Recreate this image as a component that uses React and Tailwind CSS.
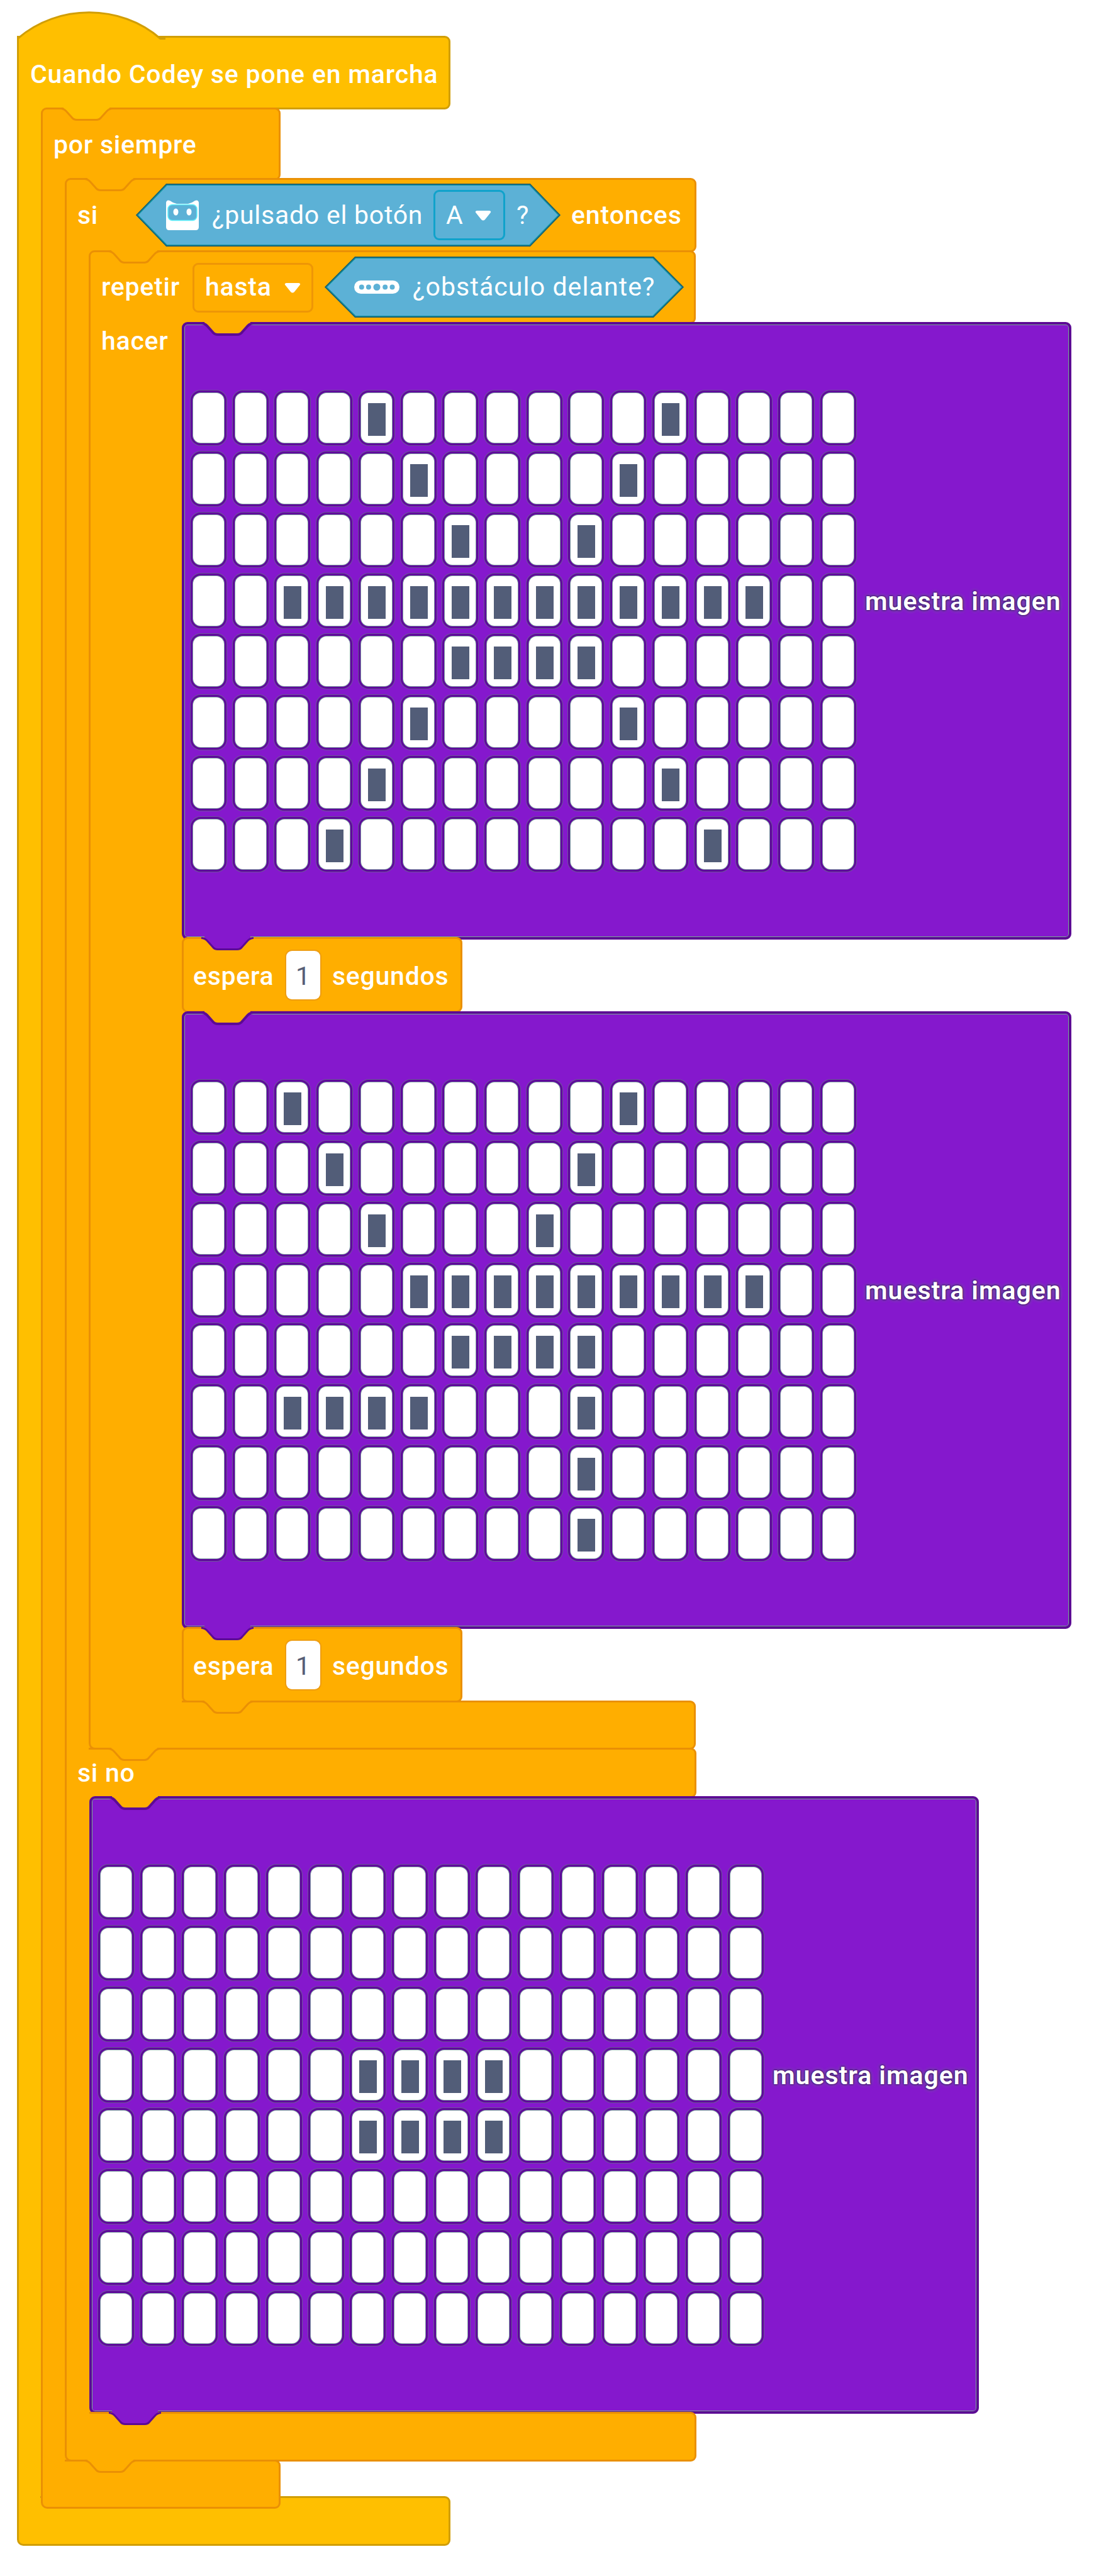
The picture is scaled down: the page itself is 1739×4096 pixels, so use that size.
const KINDS = {
  event: { fill: "#ffbf00", line: "#d19e06", box: "bg-[#ffbf00] border-[#d19e06]" },
  control: { fill: "#ffae00", line: "#ea9005", box: "bg-[#ffae00] border-[#ea9005]" },
  looks: { fill: "#8518cd", line: "#5c0a94", box: "bg-[#8518cd] border-[#5c0a94]" },
};

// Tab of the block above, drawn over the upper edge of the current block.
function Tab({ above, line, thick = 3 }) {
  const e = 6 + thick / 2;
  const b = e + 18;
  const side = `Q36 ${e} 40 ${e + 4} L49 ${b - 4} Q52 ${b} 57 ${b} H88 Q93 ${b} 96 ${b - 4} L105 ${e + 4} Q109 ${e} 114 ${e}`;
  return (
    <svg className="absolute -top-[6px] left-0 h-[34px] w-[130px]" viewBox="0 0 130 34" fill="none">
      <path d={`M36 1 L36 ${e} ${side} L109 ${e} V1 Z`} fill={KINDS[above].fill} />
      <path d={`M31 ${e} ${side}`} stroke={KINDS[line].line} strokeWidth={thick} />
    </svg>
  );
}

function Text({ children, className = "" }) {
  return <span className={`whitespace-pre leading-none ${className}`}>{children}</span>;
}

function Caret() {
  return (
    <svg className="h-[16px] w-[26px]" viewBox="0 0 26 16">
      <path d="M3 0 H23 Q27 1 24 4 L16 14 Q13 17 10 14 L2 4 Q-1 1 3 0Z" fill="#fff" />
    </svg>
  );
}

function Hexagon({ width, height, className, children }) {
  const w = width;
  const h = height;
  return (
    <div className={`relative flex items-center ${className}`}>
      <svg className="absolute inset-0 h-full w-full" viewBox={`0 0 ${w} ${h}`}>
        <path d={`M2 ${h / 2} L49 1.5 H${w - 49} L${w - 2} ${h / 2} L${w - 49} ${h - 1.5} H49 Z`} fill="#5cb1d6" stroke="#11939f" strokeWidth="3" />
        <path d={`M1 ${h / 2} L48.500 .75 H${w - 48.5} L${w - 1} ${h / 2} L${w - 48.5} ${h - 0.75} H48.500 Z`} fill="none" stroke="#1f5568" strokeWidth="1.300" />
      </svg>
      {children}
    </div>
  );
}

function CodeyIcon() {
  return (
    <svg className="h-[48px] w-[52px]" viewBox="0 0 52 48">
      <path d="M0 4 Q1 -1 6 1 Q11 5 17 6 H35 Q41 5 46 1 Q51 -1 52 4 V43 Q52 48 47 48 H5 Q0 48 0 43Z" fill="#fff" />
      <rect x="3" y="7.500" width="46" height="25" rx="7" fill="#5cb1d6" stroke="#5ff0fb" strokeWidth="1.500" />
      <ellipse cx="15.500" cy="19" rx="4" ry="5.500" fill="#fff" />
      <ellipse cx="36.500" cy="19" rx="4" ry="5.500" fill="#fff" />
    </svg>
  );
}

function SensorIcon() {
  return (
    <svg className="h-[21px] w-[72px]" viewBox="0 0 72 21">
      <rect width="72" height="21" rx="10.500" fill="#fff" />
      <g fill="#5cb1d6">
        <circle cx="11.800" cy="10.500" r="4" />
        <circle cx="22.900" cy="10.500" r="4" />
        <circle cx="36" cy="10.500" r="5.500" />
        <circle cx="49.200" cy="10.500" r="4" />
        <circle cx="60.500" cy="10.500" r="4" />
      </g>
    </svg>
  );
}

function Arm({ kind = "control", className, children }) {
  return <div className={`shrink-0 border-l-[3px] ${KINDS[kind].box} ${className}`}>{children}</div>;
}

// Lower bar of a C-shaped block: open over its arm, outlined beside it.
function Bar({ kind = "control", above, armWidth, className, children, open = false }) {
  const box = KINDS[kind].box;
  return (
    <div className={`relative -mt-[3px] flex ${className}`}>
      <div className={`${armWidth} shrink-0 border-l-[3px] ${open ? "" : "rounded-bl-[10px] border-b-[3px]"} ${box}`}>
        <div className="relative z-10">{children}</div>
      </div>
      <div className={`relative flex-1 rounded-r-[9px] border-y-[3px] border-r-[3px] ${box}`}>
        {above && (
          <div className="absolute -top-[3px] left-0">
            <Tab above={above} line={above} />
          </div>
        )}
      </div>
    </div>
  );
}

function Cell({ on }) {
  return (
    <div className="h-[79px] w-[49px] rounded-[12px] bg-white px-[11px] py-[15px] shadow-[0_0_0_1px_#7b9aa0,0_0_0_4px_#5f069c,0_0_0_5px_#6b5796]">
      {on && <div className="mt-px h-[52px] w-[28px] bg-[#525d78]" />}
    </div>
  );
}

function ImageBlock({ rows, className = "" }) {
  return (
    <div className={`relative flex h-[982px] w-[1414px] rounded-[9px] border-[4px] shadow-[inset_0_0_0_1px_#7aa896] ${KINDS.looks.box} ${className}`}>
      <div className="absolute -top-[4px] -left-[4px]">
        <Tab above="control" line="looks" thick={4} />
      </div>
      <div className="ml-[14px] mt-[109px] flex h-[757px] w-[1050px] shrink-0 flex-col justify-between">
        {rows.map((row, i) => (
          <div key={i} className="flex justify-between">
            {row.split("").map((c, j) => (
              <Cell key={j} on={c === "#"} />
            ))}
          </div>
        ))}
      </div>
      <Text className="ml-[18px] mt-[420px] text-[41px] font-semibold tracking-[.95px] [text-shadow:0_0_2px_#3f0a70,0_0_3px_#3f0a70,0_0_4px_#3f0a70,0_0_6px_#7aa896]">muestra imagen</Text>
    </div>
  );
}

function WaitBlock({ className }) {
  return (
    <div className={`relative flex w-[446px] rounded-[9px] border-[3px] pl-[15px] ${KINDS.control.box} ${className}`}>
      <div className="absolute -top-[3px] -left-[3px]">
        <Tab above="looks" line="looks" />
      </div>
      <Text className="mt-[39px] w-[148px]">espera</Text>
      <div className="mt-[19px] flex h-[77px] w-[54px] justify-center rounded-[9px] bg-white pt-[20px] text-[#575e75] shadow-[0_0_0_2px_#ee9d12]">
        <Text className="font-normal">1</Text>
      </div>
      <Text className="ml-[19px] mt-[39px]">segundos</Text>
    </div>
  );
}

const RUN = [
  "....#......#....",
  ".....#....#.....",
  "......#..#......",
  "..############..",
  "......####......",
  ".....#....#.....",
  "....#......#....",
  "...#........#...",
];
const KICK = [
  "..#.......#.....",
  "...#.....#......",
  "....#...#.......",
  ".....#########..",
  "......####......",
  "..####...#......",
  ".........#......",
  ".........#......",
];
const REST = [
  "................",
  "................",
  "................",
  "......####......",
  "......####......",
  "................",
  "................",
  "................",
];

function RepeatBlock() {
  return (
    <div className="relative -mt-[3px]">
      <div className={`relative flex h-[117px] w-[965px] rounded-t-[9px] rounded-br-[9px] border-[3px] pl-[17px] ${KINDS.control.box}`}>
        <div className="absolute -top-[3px] -left-[3px]">
          <Tab above="control" line="control" />
        </div>
        <Text className="mt-[35px] w-[145px]">repetir</Text>
        <div className="mt-[17px] flex h-[79px] w-[192px] shrink-0 rounded-[9px] border-[3px] border-[#ee9606] pl-[17px]">
          <Text className="mt-[15px] w-[126px]">hasta</Text>
          <div className="mt-[29px]"><Caret /></div>
        </div>
        <Hexagon width={571} height={97} className="ml-[18px] mt-[7px] h-[97px] w-[571px] shrink-0">
          <div className="relative ml-[47px] h-[21px] shrink-0"><SensorIcon /></div>
          <Text className="relative ml-[21px] font-normal tracking-[1.1px]">¿obstáculo delante?</Text>
        </Hexagon>
      </div>
      <div className="relative -mt-[3px] flex">
        <Arm className="w-[158px] pl-[17px] pt-[10px]">
          <Text className="block">hacer</Text>
        </Arm>
        <div className="relative -ml-[10px]">
          <ImageBlock rows={RUN} />
          <WaitBlock className="-mt-[4px] h-[120px]" />
          <ImageBlock rows={KICK} className="-mt-[2px]" />
          <WaitBlock className="-mt-[3px] h-[120px]" />
        </div>
      </div>
      <Bar above="control" armWidth="w-[148px]" className="h-[78px] w-[965px]" />
    </div>
  );
}

function IfBlock() {
  return (
    <div className="relative -mt-[3px]">
      <div className={`relative flex h-[118px] w-[1004px] rounded-t-[9px] rounded-br-[9px] border-[3px] pl-[17px] ${KINDS.control.box}`}>
        <div className="absolute -top-[3px] -left-[3px]">
          <Tab above="control" line="control" />
        </div>
        <Text className="mt-[36px] w-[93px]">si</Text>
        <Hexagon width={675} height={100} className="mt-[6px] h-[100px] w-[675px] shrink-0">
          <div className="relative ml-[48px] h-[48px] shrink-0"><CodeyIcon /></div>
          <Text className="relative ml-[21px] w-[352px] shrink-0 font-normal">¿pulsado el botón</Text>
          <div className="relative flex h-[80px] w-[114px] shrink-0 rounded-[9px] border-[3px] border-[#10a2cb] pl-[17px]">
            <Text className="mt-[17px] w-[46px] font-normal">A</Text>
            <div className="mt-[30px]"><Caret /></div>
          </div>
          <Text className="relative ml-[18px] font-normal">?</Text>
        </Hexagon>
        <Text className="ml-[17px] mt-[36px] tracking-[.9px]">entonces</Text>
      </div>
      <div className="relative -mt-px flex">
        <Arm className="-mt-[2px] w-[48px]" />
        <div className="relative -ml-[10px] pt-px">
          <RepeatBlock />
        </div>
      </div>
      <Bar above="control" armWidth="w-[38px]" className="h-[80px] w-[1004px]" open>
        <Text className="ml-[17px] block pt-[20px]">si no</Text>
      </Bar>
      <div className="relative -mt-[3px] flex">
        <Arm className="w-[49px]" />
        <div className="relative -ml-[10px]">
          <ImageBlock rows={REST} />
        </div>
      </div>
      <Bar above="looks" armWidth="w-[39px]" className="h-[79px] w-[1004px]" />
    </div>
  );
}

export default function App() {
  return (
    <main className="h-[4096px] w-[1739px] overflow-hidden bg-white pl-[27px] pt-[57px] font-['Roboto',sans-serif] text-[41px] font-medium tracking-[.75px] text-white">
      <div className="relative">
        <div className={`relative flex h-[117px] w-[689px] rounded-r-[9px] border-[3px] pl-[18px] ${KINDS.event.box}`}>
          <svg className="absolute -left-[3px] -top-[42px] h-[48px] w-[236px]" viewBox="0 0 236 48" fill="none">
            <path d="M1.500 48 V43 C65 -12 165 -12 228 43 V48 Z" fill="#ffbf00" />
            <path d="M1.500 48 V43 C65 -12 165 -12 228 43.500 H236" stroke="#d19e06" strokeWidth="3" />
          </svg>
          <Text className="mt-[38px] tracking-[.82px]">Cuando Codey se pone en marcha</Text>
        </div>
        <div className="relative -mt-[3px] flex">
          <Arm kind="event" className="w-[47px]" />
          <div className="relative z-10 -ml-[9px]">
            <div className={`relative h-[116px] w-[381px] rounded-t-[9px] rounded-br-[9px] border-[3px] pl-[17px] ${KINDS.control.box}`}>
              <div className="absolute -top-[3px] -left-[3px]">
                <Tab above="event" line="control" />
              </div>
              <Text className="block pt-[36px]">por siempre</Text>
            </div>
            <div className="relative -mt-px flex">
              <Arm className="-mt-[2px] w-[48px]" />
              <div className="relative -ml-[10px]">
                <IfBlock />
              </div>
            </div>
            <Bar above="control" armWidth="w-[38px]" className="h-[78px] w-[381px]" />
          </div>
        </div>
        <div className="-mt-[20px]">
          <Bar kind="event" armWidth="w-[37px]" className="h-[79px] w-[689px]" />
        </div>
      </div>
    </main>
  );
}
